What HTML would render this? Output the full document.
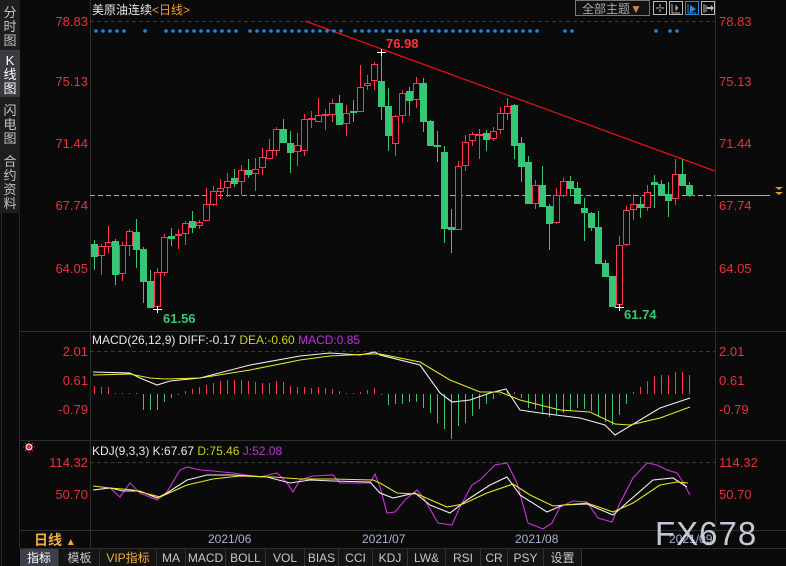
<!DOCTYPE html>
<html><head><meta charset="utf-8">
<style>
html,body{margin:0;padding:0;background:#0a0a0a;width:786px;height:566px;overflow:hidden}
svg{display:block}
text{font-family:"Liberation Sans","Noto Sans CJK SC",sans-serif}
.cj{font-family:"Liberation Sans","Noto Sans CJK SC",sans-serif}
</style></head><body>
<svg id="s" width="786" height="566" viewBox="0 0 786 566" xmlns="http://www.w3.org/2000/svg">
<rect width="786" height="566" fill="#0a0a0a"/>
<!-- sidebar -->
<rect x="0" y="0" width="20" height="213" fill="#1e1e1e"/>
<rect x="0" y="50" width="20" height="47" fill="#3a3a42"/>
<line x1="1.5" y1="213" x2="1.5" y2="566" stroke="#2a2a2a"/>
<line x1="19.5" y1="213" x2="19.5" y2="548" stroke="#2a2a2a"/>
<g fill="#c4c4c4" font-size="13" class="cj" text-anchor="middle">
<text x="10" y="17">分</text><text x="10" y="31">时</text><text x="10" y="45">图</text>
<text x="10" y="65" fill="#fff">K</text><text x="10" y="79" fill="#fff">线</text><text x="10" y="93" fill="#fff">图</text>
<text x="10" y="115">闪</text><text x="10" y="129">电</text><text x="10" y="143">图</text>
<text x="10" y="166">合</text><text x="10" y="180">约</text><text x="10" y="194">资</text><text x="10" y="208">料</text>
</g>
<!-- frame lines -->
<g stroke="#2e2e2e" stroke-width="1">
<line x1="90.5" y1="0" x2="90.5" y2="548"/>
<line x1="715.5" y1="0" x2="715.5" y2="530"/>
<line x1="20" y1="331.5" x2="786" y2="331.5"/>
<line x1="20" y1="440.5" x2="786" y2="440.5"/>
<line x1="20" y1="530.5" x2="786" y2="530.5"/>
<line x1="20" y1="548.5" x2="786" y2="548.5"/>
</g>
<g stroke="#3a3a3a" stroke-dasharray="4,3">
<line x1="90" y1="21.5" x2="715" y2="21.5"/>
<line x1="90" y1="351.5" x2="715" y2="351.5"/>
<line x1="90" y1="462.5" x2="715" y2="462.5"/>
</g>
<!-- axis labels -->
<g fill="#e8303e" font-size="13">
<g text-anchor="end">
<text x="88" y="26">78.83</text><text x="88" y="86">75.13</text><text x="88" y="148">71.44</text><text x="88" y="210">67.74</text><text x="88" y="273">64.05</text>
<text x="88" y="356">2.01</text><text x="88" y="385">0.61</text><text x="88" y="414">-0.79</text>
<text x="88" y="467">114.32</text><text x="88" y="499">50.70</text>
</g>
<text x="719" y="26">78.83</text><text x="719" y="86">75.13</text><text x="719" y="148">71.44</text><text x="719" y="210">67.74</text><text x="719" y="273">64.05</text>
<text x="719" y="356">2.01</text><text x="719" y="385">0.61</text><text x="719" y="414">-0.79</text>
<text x="719" y="467">114.32</text><text x="719" y="499">50.70</text>
</g>
<!-- title -->
<text x="92" y="14" font-size="12" fill="#e8e8e8" class="cj">美原油连续<tspan fill="#f0a030">&lt;日线&gt;</tspan></text>
<!-- top right controls -->
<rect x="575.5" y="0.5" width="74" height="15" fill="#111" stroke="#777"/>
<text x="582" y="13" font-size="12" fill="#aaa" class="cj">全部主题<tspan fill="#d08050">▼</tspan></text>
<g fill="none" stroke="#bbb">
<rect x="653.5" y="1.5" width="13" height="13"/>
<rect x="669.5" y="1.5" width="13" height="13"/>
<rect x="685.5" y="1.5" width="13" height="13" stroke="#2a8ad8"/>
<rect x="701.5" y="1.5" width="13" height="13"/>
<path d="M660 4v4M660 9v3M656 8h3M661 8h3"/>
<path d="M672 4v9h8M676 5v6M678 7l-2 1 2 1"/>
<path d="M688 4v9h8" stroke="#2a8ad8"/>
<path d="M704 4v9M706 5v7"/>
</g>
<path d="M690 5l6 4-6 4z" fill="#2a8ad8"/>
<path d="M707 7h4v-2l3 3-3 3v-2h-4z" fill="#bbb"/>
<!-- right side markers -->
<line x1="717" y1="195.5" x2="770" y2="195.5" stroke="#aaa"/>
<path d="M775 187l4 3 4-3zM775 192l4 3 4-3z" fill="#e0a020"/>
<!-- dashed price line -->
<line x1="90" y1="195.5" x2="715" y2="195.5" stroke="#e89a40" stroke-dasharray="5,3"/>
<!-- trend -->
<line x1="305" y1="21" x2="715" y2="171" stroke="#ee1111" stroke-width="1.2"/>
<g id="g"></g>
<!-- annotations -->
<text x="386" y="48" font-size="13" font-weight="bold" fill="#ff3344">76.98</text>
<text x="163" y="323" font-size="13" font-weight="bold" fill="#36c776">61.56</text>
<text x="624" y="319" font-size="13" font-weight="bold" fill="#36c776">61.74</text>
<!-- MACD label -->
<text x="92" y="344" font-size="12" fill="#e8e8e8">MACD(26,12,9) DIFF:-0.17 <tspan fill="#c8d020">DEA:-0.60</tspan> <tspan fill="#c030e0">MACD:0.85</tspan></text>
<text x="92" y="455" font-size="12" fill="#e8e8e8">KDJ(9,3,3) K:67.67 <tspan fill="#c8d020">D:75.46</tspan> <tspan fill="#c030e0">J:52.08</tspan></text>
<circle cx="29" cy="447" r="3" fill="#e8303e" stroke="#fff" stroke-width="1"/>
<g stroke="#e8303e" stroke-width="1"><path d="M29 441v1M29 452v1M23 447h1M34 447h1M25 443l1 1M33 443l-1 1M25 451l1-1M33 451l-1-1"/></g>
<!-- date axis -->
<text x="34" y="545" font-size="14" font-weight="bold" fill="#f0b040" class="cj">日线 <tspan font-size="10">▲</tspan></text>
<g fill="#a8b4cc" font-size="12">
<text x="208" y="543">2021/06</text><text x="362" y="543">2021/07</text><text x="515" y="543">2021/08</text><text x="669" y="543">2021/09</text>
</g>
<text x="655" y="545" font-size="33" fill="#d4dae6" fill-opacity="0.92" letter-spacing="1">FX678</text>
<!-- bottom toolbar -->
<g id="tb"></g>
</svg>
<script>
var NS="http://www.w3.org/2000/svg",g=document.getElementById('g');
function el(t,a,p){var e=document.createElementNS(NS,t);for(var k in a)e.setAttribute(k,a[k]);(p||g).appendChild(e);return e;}
var C=[[244,256,240,270,0],[246,255,244,275,1],[242,246,226,253,1],[241,274,239,285,0],[245,273,242,281,1],[231,245,229,256,1],[232,249,219,268,0],[249,281,247,303,0],[281,307,270,307,0],[272,306,268,309,1],
[237,272,234,276,1],[236,238,228,246,0],[234,235,229,249,1],[223,233,221,245,1],[221,227,211,233,0],[222,225,220,229,1],[204,220,188,221,1],[191,204,186,206,1],[188,191,179,199,1],[181,187,173,197,1],
[178,183,169,187,0],[170,181,165,195,1],[170,174,159,178,0],[169,173,158,191,1],[157,167,148,175,1],[150,158,139,159,1],[129,150,127,156,1],[129,142,119,142,0],[143,152,131,173,0],[145,151,133,166,1],
[119,150,114,156,1],[118,119,111,128,1],[115,121,98,122,1],[114,115,109,130,1],[103,114,99,122,1],[103,124,95,125,0],[113,123,105,136,1],[111,112,100,122,0],[87,111,65,112,1],[83,85,75,90,1],
[64,80,62,90,1],[81,106,52,120,0],[106,135,88,151,0],[116,143,115,156,1],[93,115,90,123,1],[91,100,87,116,0],[83,99,77,108,1],[83,121,78,132,0],[121,145,120,145,0],[145,146,131,162,0],
[152,228,146,243,0],[227,229,209,253,0],[166,229,161,229,1],[142,165,135,171,1],[134,140,132,146,1],[134,135,129,159,1],[133,139,130,151,0],[131,138,127,141,1],[113,129,107,134,1],[106,113,98,120,1],
[105,145,104,159,0],[143,166,137,182,0],[162,203,156,203,0],[185,203,180,209,1],[185,206,166,206,0],[206,223,204,250,0],[195,222,188,224,1],[181,195,178,197,1],[181,188,176,195,0],[188,203,182,203,0],
[208,212,198,241,0],[213,227,212,231,0],[227,263,211,263,0],[263,276,260,276,0],[276,306,276,306,0],[245,304,236,307,1],[210,244,206,246,1],[204,209,194,220,1],[204,207,197,218,0],[192,207,185,211,1],
[182,184,175,208,0],[184,195,180,195,0],[194,200,182,217,0],[174,198,159,205,1],[174,185,159,185,0],[185,195,182,197,0]];
var R="#ff3355",G="#36c776";
C.forEach(function(c,i){var x=94+7*i,col=c[4]?R:G;
 if(c[4]){el('line',{x1:x+.5,y1:c[2],x2:x+.5,y2:c[0],stroke:col});el('line',{x1:x+.5,y1:c[1],x2:x+.5,y2:c[3],stroke:col});
  el('rect',{x:x-2.5,y:c[0]+.5,width:6,height:Math.max(1,c[1]-c[0]),fill:'#0a0a0a',stroke:col});}
 else{el('line',{x1:x+.5,y1:c[2],x2:x+.5,y2:c[3],stroke:col});el('rect',{x:x-3,y:c[0],width:7,height:Math.max(2,c[1]-c[0]+1),fill:col});}
});
[[381,52],[157,309],[619,307]].forEach(function(p){el('path',{d:'M'+(p[0]-4)+' '+(p[1]+.5)+'h9M'+(p[0]+.5)+' '+(p[1]-3)+'v7',stroke:'#fff'});});
var D=[0,1,2,3,4,7,10,11,12,13,14,15,16,17,18,19,20,22,23,24,25,26,27,28,29,30,31,32,33,34,35,37,38,39,40,41,42,43,44,45,46,47,48,49,50,51,52,53,54,55,56,57,58,59,60,61,62,63,67,68,80,82,83];
D.forEach(function(i){el('circle',{cx:96+7*i,cy:31,r:1.8,fill:'#1e88e0'});});
var H=[8,7,7,1,1,1,1,-16,-16,-16,-8,-4,-1,3,5,7,9,11,13,14,14,14,13,12,11,11,13,12,8,7,7,6,7,6,5,3,1,1,2,4,6,-1,-11,-10,-10,-8,-8,-14,-19,-29,-35,-45,-32,-29,-22,-15,-10,-5,-1,2,2,-4,-14,-15,-19,-23,-21,-19,-17,-14,-15,-17,-22,-28,-31,-21,-10,2,7,13,18,19,19,22,22,19];
H.forEach(function(h,i){var x=94.5+7*i;el('line',{x1:x,y1:394,x2:x,y2:394-h,stroke:h>=0?R:G});});
function pl(pts,col){el('polyline',{points:pts,fill:'none',stroke:col,'stroke-width':1.1});}
pl("93,372 130,373 140,378 157,385 170,381 200,378 250,365 300,356 330,353 360,355 375,352 380,355 420,365 440,393 452,402 470,400 490,393 506,389 520,410 540,413 580,418 605,425 615,435 640,420 660,408 690,398","#f0f0f0");
pl("93,375 130,374 150,378 165,379 200,378 250,370 300,360 330,356 370,354 380,354 420,362 450,380 480,392 500,392 520,400 560,410 590,412 615,424 630,425 660,418 690,407","#e8e820");
pl("93,490 110,488 120,497 130,483 140,493 157,500 167,492 180,470 187,467 200,470 213,471 233,473 260,477 277,473 287,483 293,492 300,480 313,476 333,475 340,483 370,483 375,474 380,487 387,513 395,512 405,500 417,490 423,497 438,523 452,525 460,507 472,485 480,480 495,465 507,463 517,483 528,523 543,529 552,523 560,507 573,501 587,502 598,518 612,522 620,503 633,478 647,463 657,465 667,470 677,473 683,482 690,495","#d030e0");
pl("93,490 110,488 123,491 140,491 157,498 167,493 187,480 207,475 233,475 267,477 290,483 310,480 333,481 370,482 380,493 393,498 415,493 430,505 450,513 467,500 490,485 507,477 520,495 547,512 563,505 587,504 613,515 630,500 653,480 673,478 687,487","#f0f0f0");
pl("93,486 110,488 133,490 160,497 187,485 213,479 240,476 273,477 300,479 333,479 373,480 380,483 397,493 417,494 447,507 463,504 487,493 513,484 530,495 553,506 587,503 613,512 633,503 660,485 677,482 688,483","#e8e820");
var tb=document.getElementById('tb');
var T=[["指标",20,58,1],["模板",60,99,0],["VIP指标",100,156,2],["MA",157,185],["MACD",186,225],["BOLL",226,265],["VOL",266,304],["BIAS",305,338],["CCI",339,372],["KDJ",373,407],["LW&",408,445],["RSI",446,480],["CR",481,507],["PSY",508,543],["设置",544,581,0]];
T.forEach(function(t){var sel=t[3]===1;
 el('rect',{x:t[1],y:549,width:t[2]-t[1],height:17,fill:sel?'#3c3e4a':'#141414'},tb);
 el('line',{x1:t[2]+.5,y1:549,x2:t[2]+.5,y2:566,stroke:'#333'},tb);
 var e=el('text',{x:(t[1]+t[2])/2,y:562,'font-size':12,'text-anchor':'middle',fill:sel?'#fff':(t[3]===2?'#f0b040':'#c8c8c8'),'font-family':t[3]===undefined?'"Liberation Mono",monospace':'"Liberation Sans","Noto Sans CJK SC",sans-serif'},tb);
 e.textContent=t[0];});
</script>
</body></html>
